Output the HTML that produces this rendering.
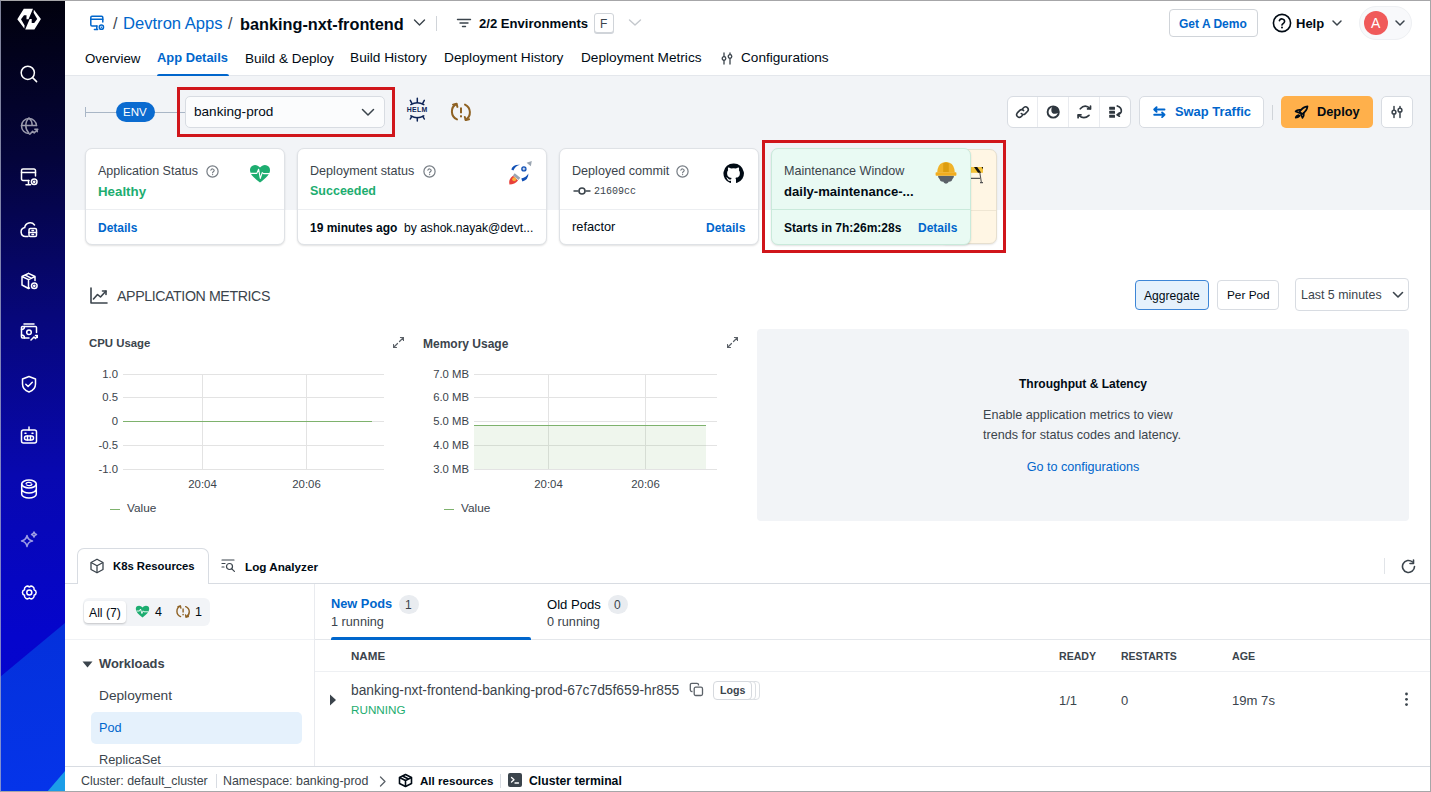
<!DOCTYPE html>
<html><head><meta charset="utf-8">
<style>
*{box-sizing:border-box;margin:0;padding:0}
html,body{width:1431px;height:792px;overflow:hidden;background:#fff;font-family:"Liberation Sans",sans-serif;color:#000a14}
.a{position:absolute}
.t{position:absolute;white-space:nowrap}
#frame{position:absolute;left:0;top:0;width:1431px;height:792px;border:1px solid #a6a6a8;border-left-color:rgba(170,175,200,0.75);z-index:50}
#side{position:absolute;left:0;top:0;width:65px;height:792px;overflow:hidden;background:linear-gradient(176deg,#01010c 0%,#04043a 20%,#07077a 40%,#0808b0 60%,#0505cc 80%,#0404d4 100%)}
</style></head><body>
<div class="a" style="left:65px;top:0px;width:1366px;height:792px;background:#fff"></div><div class="a" style="left:65px;top:76px;width:1366px;height:134px;background:#f2f4f7"></div><div class="a" style="left:65px;top:75px;width:1366px;height:1px;background:#e4e7ec"></div><svg class="a" style="left:89px;top:15px;" width="16" height="16" viewBox="0 0 16 16"><g fill="none" stroke="#0066cc" stroke-width="1.5" stroke-linecap="round" stroke-linejoin="round"><path d="M8 11H3a1.2 1.2 0 0 1-1.2-1.2V2.4A1.2 1.2 0 0 1 3 1.2h9.6a1.2 1.2 0 0 1 1.2 1.2V7"/><path d="M1.8 4.2h12"/><path d="M7.8 11v3.2M5.4 14.6h3.2"/><circle cx="12.4" cy="12.2" r="2.1"/></g><circle cx="12.4" cy="12.2" r="0.7" fill="#0066cc"/></svg><div class="t" style="left:113px;top:calc(30px - 13.55px);font-size:16px;line-height:16px;color:#3b444c;">/</div><div class="t" style="left:123px;top:calc(30px - 14.06px);font-size:16.6px;line-height:16.6px;color:#0066cc;">Devtron Apps</div><div class="t" style="left:228px;top:calc(30px - 13.55px);font-size:16px;line-height:16px;color:#3b444c;">/</div><div class="t" style="left:240px;top:calc(30px - 13.81px);font-size:16.3px;line-height:16.3px;color:#000a14;font-weight:700;">banking-nxt-frontend</div><svg class="a" style="left:413px;top:18px;" width="13" height="9" viewBox="0 0 13 9"><path d="M1.5 2l5 5 5-5" fill="none" stroke="#3b444c" stroke-width="1.4" stroke-linecap="round" stroke-linejoin="round"/></svg><div class="a" style="left:436px;top:16px;width:1px;height:15px;background:#d0d4d9"></div><svg class="a" style="left:456px;top:18px;" width="16" height="10" viewBox="0 0 16 10"><g stroke="#3b444c" stroke-width="1.4" stroke-linecap="round"><path d="M1.5 1.5h13M4 5h8M6.5 8.5h3"/></g></svg><div class="t" style="left:479px;top:calc(28px - 11.10px);font-size:13.1px;line-height:13.1px;color:#000a14;font-weight:700;">2/2 Environments</div><div class="a" style="left:594px;top:13px;width:20px;height:20px;border:1px solid #d0d4d9;border-radius:3px;background:#fff;box-shadow:0 1px 0 #d0d4d9"></div><div class="t" style="left:600px;top:calc(28px - 10.16px);font-size:12px;line-height:12px;color:#3b444c;">F</div><svg class="a" style="left:628px;top:18px;" width="14" height="9" viewBox="0 0 14 9"><path d="M1.5 2l5.5 5 5.5-5" fill="none" stroke="#c4c8cd" stroke-width="1.4" stroke-linecap="round" stroke-linejoin="round"/></svg><div class="a" style="left:1169px;top:9px;width:89px;height:28px;border:1px solid #d0d4d9;border-radius:4px;background:#fff"></div><div class="t" style="left:1179px;top:calc(28px - 10.16px);font-size:12px;line-height:12px;color:#0066cc;font-weight:700;">Get A Demo</div><svg class="a" style="left:1272px;top:13px;" width="20" height="20" viewBox="0 0 20 20"><circle cx="10" cy="10" r="8.6" fill="none" stroke="#000a14" stroke-width="1.6"/><path d="M7.4 7.6a2.7 2.7 0 0 1 5.2.9c0 1.8-2.6 2.3-2.6 3.6" fill="none" stroke="#000a14" stroke-width="1.6" stroke-linecap="round"/><circle cx="10" cy="14.6" r="1" fill="#000a14"/></svg><div class="t" style="left:1296px;top:calc(28px - 11.01px);font-size:13px;line-height:13px;color:#000a14;font-weight:700;">Help</div><svg class="a" style="left:1331px;top:19px;" width="12" height="8" viewBox="0 0 12 8"><path d="M2 2l4 4 4-4" fill="none" stroke="#3b444c" stroke-width="1.5" stroke-linecap="round" stroke-linejoin="round"/></svg><div class="a" style="left:1359px;top:6px;width:53px;height:34px;border:1px solid #eef0f3;border-radius:17px;background:#f8f9fb"></div><div class="a" style="left:1364px;top:11px;width:24px;height:24px;border-radius:50%;background:#f05a5a"></div><div class="t" style="left:1371px;top:calc(28px - 11.86px);font-size:14px;line-height:14px;color:#fff;">A</div><svg class="a" style="left:1394px;top:19px;" width="12" height="8" viewBox="0 0 12 8"><path d="M2 2l4 4 4-4" fill="none" stroke="#3b444c" stroke-width="1.5" stroke-linecap="round" stroke-linejoin="round"/></svg><div class="t" style="left:85px;top:calc(63px - 11.27px);font-size:13.3px;line-height:13.3px;color:#000a14;">Overview</div><div class="t" style="left:157px;top:calc(63px - 10.93px);font-size:12.9px;line-height:12.9px;color:#0066cc;font-weight:700;">App Details</div><div class="a" style="left:157px;top:74px;width:72px;height:2px;background:#0066cc;border-radius:2px 2px 0 0"></div><div class="t" style="left:245px;top:calc(63px - 11.48px);font-size:13.55px;line-height:13.55px;color:#000a14;">Build &amp; Deploy</div><div class="t" style="left:350px;top:calc(63px - 11.60px);font-size:13.7px;line-height:13.7px;color:#000a14;">Build History</div><div class="t" style="left:444px;top:calc(63px - 11.60px);font-size:13.7px;line-height:13.7px;color:#000a14;">Deployment History</div><div class="t" style="left:581px;top:calc(63px - 11.56px);font-size:13.65px;line-height:13.65px;color:#000a14;">Deployment Metrics</div><svg class="a" style="left:721px;top:52px;" width="12" height="13" viewBox="0 0 12 13"><g fill="none" stroke="#3b444c" stroke-width="1.3" stroke-linecap="round"><path d="M3 1v3.5M3 8.5V12M9 1v1.5M9 6.5V12"/><circle cx="3" cy="6.5" r="1.8"/><circle cx="9" cy="4.5" r="1.8"/></g></svg><div class="t" style="left:741px;top:calc(63px - 11.52px);font-size:13.6px;line-height:13.6px;color:#000a14;">Configurations</div><div class="a" style="left:85px;top:107px;width:1px;height:10px;background:#a9b6c6"></div><div class="a" style="left:85px;top:112px;width:100px;height:1px;background:#a9b6c6"></div><div class="a" style="left:116px;top:102px;width:39px;height:20px;background:#0b6bd0;border-radius:10px"></div><div class="t" style="left:123px;top:calc(117px - 9.74px);font-size:11.5px;line-height:11.5px;color:#fff;">ENV</div><div class="a" style="left:185px;top:96px;width:200px;height:32px;border:1px solid #d8dce2;border-radius:5px;background:#fbfcfd"></div><div class="t" style="left:194px;top:calc(117px - 11.52px);font-size:13.6px;line-height:13.6px;color:#000a14;">banking-prod</div><svg class="a" style="left:361px;top:108px;" width="14" height="9" viewBox="0 0 14 9"><path d="M1.5 1.5l5.5 5.5 5.5-5.5" fill="none" stroke="#3b444c" stroke-width="1.5" stroke-linecap="round" stroke-linejoin="round"/></svg><div class="a" style="left:177px;top:87px;width:218px;height:50px;border:3px solid #d0151b"></div><svg class="a" style="left:400px;top:94px;" width="34" height="32" viewBox="0 0 34 32"><g fill="none" stroke="#0d2356" stroke-width="1.5" stroke-linecap="round">
<path d="M10.8 10.6Q17.3 6.8 23.8 10.6M10.8 21.8Q17.3 25.6 23.8 21.8"/>
<path d="M17.3 4.3v4.2M10.3 6.3l1.6 3.1M24.3 6.3l-1.6 3.1M17.3 23.6v3.3M10.3 25l1.5-2.7M24.3 25l-1.5-2.7"/></g>
<text x="17.2" y="17.9" text-anchor="middle" font-family="Liberation Sans" font-weight="700" font-size="6.9" fill="#0d2356" letter-spacing="0.35">HELM</text></svg><svg class="a" style="left:400px;top:94px;" width="80" height="32" viewBox="0 0 80 32"><g fill="none" stroke="#8f6224" stroke-width="2" stroke-linecap="round" stroke-linejoin="round">
<path d="M56.4 10A8.6 8.6 0 0 0 57 25.4"/><path d="M65 10.6A8.6 8.6 0 0 1 65.6 25.8"/>
<path d="M53 10.6l3.6-0.9 0.8 3.2"/><path d="M64.8 23l1 3.1 3.3-0.8"/></g>
<path d="M61 13.6v5.6" stroke="#8f6224" stroke-width="2" stroke-linecap="butt"/><rect x="60" y="21.3" width="2" height="2" fill="#8f6224"/></svg><div class="a" style="left:1007px;top:96px;width:124px;height:32px;border:1px solid #d8dce2;border-radius:6px;background:#fff"></div><div class="a" style="left:1037px;top:97px;width:1px;height:30px;background:#e9ebef"></div><div class="a" style="left:1068px;top:97px;width:1px;height:30px;background:#e9ebef"></div><div class="a" style="left:1099px;top:97px;width:1px;height:30px;background:#e9ebef"></div><svg class="a" style="left:1015px;top:105px;" width="15" height="14" viewBox="0 0 15 14"><g fill="none" stroke="#2f373f" stroke-width="1.6" stroke-linecap="round"><path d="M6.3 8.6a2.6 2.6 0 0 0 3.8.2l2.5-2.5a2.7 2.7 0 0 0-3.8-3.8L7.6 3.7"/><path d="M8.6 5.6a2.6 2.6 0 0 0-3.8-.2L2.3 7.9a2.7 2.7 0 0 0 3.8 3.8l1.2-1.2"/></g></svg><svg class="a" style="left:1040px;top:100px;" width="88" height="24" viewBox="0 0 88 24"><defs><clipPath id="mc"><circle cx="13.2" cy="12" r="5.6"/></clipPath></defs>
<circle cx="13.2" cy="12" r="5.6" fill="none" stroke="#2f373f" stroke-width="1.9"/>
<circle cx="15.2" cy="9.9" r="3.9" fill="#2f373f" clip-path="url(#mc)"/>
<g fill="none" stroke="#2f373f" stroke-width="1.7" stroke-linecap="round" stroke-linejoin="round">
<path d="M40.3 8.8Q45 3.6 50.2 8.6"/><path d="M47.6 8.9h2.9V6"/>
<path d="M49 15.4Q43.8 20 38.4 15.2"/><path d="M41 14.8h-2.9v2.9"/>
<path d="M77.3 6Q81.8 7.6 81.3 11.4Q80.8 14 77.4 14.8"/><path d="M79.4 13l-2.2 1.8 2.2 1.4"/></g>
<g fill="#2f373f"><rect x="69.2" y="6.8" width="5.8" height="3" rx="0.5"/><rect x="69.2" y="10.8" width="5.8" height="3" rx="0.5"/><rect x="69.2" y="14.8" width="5.8" height="3" rx="0.5"/></g></svg><div class="a" style="left:1139px;top:96px;width:125px;height:32px;border:1px solid #d8dce2;border-radius:5px;background:#fff"></div><svg class="a" style="left:1148px;top:100px;" width="30" height="24" viewBox="0 0 30 24"><g fill="none" stroke="#0066cc" stroke-width="1.9" stroke-linecap="round" stroke-linejoin="round"><path d="M16.5 9.5H6.2M8.6 7.2L6.2 9.5l2.4 2.3M6.2 14.8h10.3M14.1 12.5l2.4 2.3-2.4 2.3"/></g></svg><div class="t" style="left:1175px;top:calc(117px - 10.93px);font-size:12.9px;line-height:12.9px;color:#0066cc;font-weight:700;">Swap Traffic</div><div class="a" style="left:1272px;top:105px;width:1px;height:15px;background:#d0d4d9"></div><div class="a" style="left:1281px;top:96px;width:92px;height:32px;border-radius:5px;background:#ffb04b"></div><svg class="a" style="left:1288px;top:100px;" width="30" height="24" viewBox="0 0 30 24"><g fill="none" stroke="#000a14" stroke-width="1.7" stroke-linecap="round" stroke-linejoin="round"><path d="M19.5 6.3C16.8 6.5 13.8 8.4 11.6 11.6l2.5 2.5c3.2-2.2 5.1-5.2 5.4-7.8z"/><path d="M12.6 9.9Q9.3 9.4 7.6 11.4l4 1.6M15.8 13.1Q16.3 16.4 14.5 17.9l-1.6-3.9M10.8 15Q8 15.6 7.7 17.7Q9.9 17.6 11.7 15.9"/></g></svg><div class="t" style="left:1317px;top:calc(117px - 10.84px);font-size:12.8px;line-height:12.8px;color:#000a14;font-weight:700;">Deploy</div><div class="a" style="left:1381px;top:96px;width:32px;height:32px;border:1px solid #d8dce2;border-radius:5px;background:#fff"></div><svg class="a" style="left:1390px;top:105px;" width="14" height="14" viewBox="0 0 14 14"><g fill="none" stroke="#3b444c" stroke-width="1.5" stroke-linecap="round"><path d="M4 1.5v3.5M4 9.5v3M10 1.5v1.5M10 7.5v5"/><circle cx="4" cy="7.2" r="1.9"/><circle cx="10" cy="5.2" r="1.9"/></g></svg><div class="a" style="left:85px;top:148px;width:200px;height:97px;border:1px solid #dfe2e6;border-radius:7px;background:#fff;box-shadow:0 1px 2px rgba(0,0,0,0.12)"></div><div class="a" style="left:86px;top:209px;width:198px;height:1px;background:#eceef1"></div><div class="t" style="left:98px;top:calc(176px - 10.59px);font-size:12.5px;line-height:12.5px;color:#3b444c;">Application Status</div><svg class="a" style="left:206px;top:165px;" width="13" height="13" viewBox="0 0 13 13"><circle cx="6.5" cy="6.5" r="5.6" fill="none" stroke="#767d84" stroke-width="1.2"/><path d="M4.9 5.1a1.7 1.7 0 0 1 3.3.5c0 1.1-1.6 1.3-1.6 2.2" fill="none" stroke="#767d84" stroke-width="1.2" stroke-linecap="round"/><circle cx="6.6" cy="9.6" r="0.7" fill="#767d84"/></svg><svg class="a" style="left:249px;top:164px;" width="22" height="19" viewBox="0 0 22 19"><path d="M11 18.5C5 14 1 10.5 1 6.2A5 5 0 0 1 6 1c2 0 3.4 1 5 2.6C12.6 2 14 1 16 1a5 5 0 0 1 5 5.2c0 4.3-4 7.8-10 12.3z" fill="#1dad70"/><path d="M0 9.4H7.8L9.6 5.2L11.3 14.4L13.2 8.6L14.6 9.6H22" fill="none" stroke="#fff" stroke-width="1.1" stroke-linejoin="round"/></svg><div class="t" style="left:98px;top:calc(196px - 11.27px);font-size:13.3px;line-height:13.3px;color:#1dad70;font-weight:700;">Healthy</div><div class="t" style="left:98px;top:calc(232px - 10.16px);font-size:12px;line-height:12px;color:#0066cc;font-weight:700;">Details</div><div class="a" style="left:297px;top:148px;width:250px;height:97px;border:1px solid #dfe2e6;border-radius:7px;background:#fff;box-shadow:0 1px 2px rgba(0,0,0,0.12)"></div><div class="a" style="left:298px;top:209px;width:248px;height:1px;background:#eceef1"></div><div class="t" style="left:310px;top:calc(176px - 10.67px);font-size:12.6px;line-height:12.6px;color:#3b444c;">Deployment status</div><svg class="a" style="left:423px;top:165px;" width="13" height="13" viewBox="0 0 13 13"><circle cx="6.5" cy="6.5" r="5.6" fill="none" stroke="#767d84" stroke-width="1.2"/><path d="M4.9 5.1a1.7 1.7 0 0 1 3.3.5c0 1.1-1.6 1.3-1.6 2.2" fill="none" stroke="#767d84" stroke-width="1.2" stroke-linecap="round"/><circle cx="6.6" cy="9.6" r="0.7" fill="#767d84"/></svg><svg class="a" style="left:502px;top:155px;" width="36" height="35" viewBox="0 0 36 35"><path d="M24.6 7.8L29.8 6l-1 5.2z" fill="#9aa5b1"/>
<path d="M9.3 14.6Q10.5 9.4 18 9.8Q13.2 11 11.4 15.6z" fill="#0f4fb5"/>
<path d="M19.3 23.6Q24.2 22.6 26.4 18.6Q26.6 24.8 20.4 26.4z" fill="#0f4fb5"/>
<circle cx="21.9" cy="13.9" r="2.7" fill="#0f4fb5"/><path d="M20.5 13.9h2.8M21.9 12.5v2.8" stroke="#fff" stroke-width="0.9"/>
<path d="M11.8 19.3l5.6 4.6" stroke="#9aa5b1" stroke-width="2.8"/>
<path d="M7.4 29.6Q6.2 24.2 11 20.8L16 25.6Q12.8 29.4 7.4 29.6z" fill="#e8403a"/>
<circle cx="12.2" cy="24.3" r="2" fill="#f8b03a"/></svg><div class="t" style="left:310px;top:calc(196px - 10.59px);font-size:12.5px;line-height:12.5px;color:#1dad70;font-weight:700;">Succeeded</div><div class="t" style="left:310px;top:calc(232px - 10.16px);font-size:12px;line-height:12px;color:#000a14;font-weight:700;">19 minutes ago</div><div class="t" style="left:404px;top:calc(232px - 10.25px);font-size:12.1px;line-height:12.1px;color:#000a14;">by ashok.nayak@devt...</div><div class="a" style="left:559px;top:148px;width:200px;height:97px;border:1px solid #dfe2e6;border-radius:7px;background:#fff;box-shadow:0 1px 2px rgba(0,0,0,0.12)"></div><div class="a" style="left:560px;top:209px;width:198px;height:1px;background:#eceef1"></div><div class="t" style="left:572px;top:calc(176px - 10.67px);font-size:12.6px;line-height:12.6px;color:#3b444c;">Deployed commit</div><svg class="a" style="left:676px;top:165px;" width="13" height="13" viewBox="0 0 13 13"><circle cx="6.5" cy="6.5" r="5.6" fill="none" stroke="#767d84" stroke-width="1.2"/><path d="M4.9 5.1a1.7 1.7 0 0 1 3.3.5c0 1.1-1.6 1.3-1.6 2.2" fill="none" stroke="#767d84" stroke-width="1.2" stroke-linecap="round"/><circle cx="6.6" cy="9.6" r="0.7" fill="#767d84"/></svg><svg class="a" style="left:723px;top:163px;" width="21" height="21" viewBox="0 0 21 21"><path fill="#000a14" d="M10.5 0.5a10 10 0 0 0-3.2 19.5c.5.1.7-.2.7-.5v-1.7c-2.8.6-3.4-1.3-3.4-1.3-.5-1.2-1.1-1.5-1.1-1.5-.9-.6.1-.6.1-.6 1 .1 1.5 1 1.5 1 .9 1.5 2.4 1.1 3 .8.1-.6.4-1.1.6-1.3-2.2-.3-4.6-1.1-4.6-5 0-1.1.4-2 1-2.7-.1-.3-.4-1.3.1-2.7 0 0 .8-.3 2.8 1a9.6 9.6 0 0 1 5 0c1.9-1.3 2.8-1 2.8-1 .5 1.4.2 2.4.1 2.7.6.7 1 1.6 1 2.7 0 3.9-2.3 4.7-4.6 5 .4.3.7.9.7 1.9v2.8c0 .3.2.6.7.5A10 10 0 0 0 10.5.5z"/></svg><svg class="a" style="left:573px;top:187px;" width="18" height="8" viewBox="0 0 18 8"><g fill="none" stroke="#3b444c" stroke-width="1.6"><path d="M0.5 4h5M12.5 4h5"/><circle cx="9" cy="4" r="3"/></g></svg><div class="t" style="left:594px;top:calc(195px - 8.47px);font-size:10px;line-height:10px;color:#3b444c;font-family:'Liberation Mono',monospace;">21609cc</div><div class="t" style="left:572px;top:calc(232px - 10.84px);font-size:12.8px;line-height:12.8px;color:#000a14;">refactor</div><div class="t" style="left:706px;top:calc(232px - 10.16px);font-size:12px;line-height:12px;color:#0066cc;font-weight:700;">Details</div><div class="a" style="left:940px;top:149px;width:57px;height:95px;border:1px solid #e6dfcf;border-radius:7px;background:#fff6e4;box-shadow:0 1px 2px rgba(0,0,0,0.1)"></div><div class="a" style="left:941px;top:210px;width:55px;height:1px;background:#efe6d3"></div><svg class="a" style="left:960px;top:155px;" width="30" height="32" viewBox="0 0 30 32"><g stroke="#555" stroke-width="1.1" fill="none"><path d="M19.8 17.5l1.5 9.5M11 23.4h9M20 27.6h3"/></g>
<path d="M10.5 12h12.5v5.8H10.5z" fill="#f3c33a"/><path d="M14 12h3.2l4 5.8h-3.2z" fill="#111"/><path d="M21.5 12h1.5v2.2z" fill="#111"/></svg><div class="a" style="left:771px;top:148px;width:200px;height:97px;border:1px solid #c9eadb;border-radius:7px;background:#e9faf3;box-shadow:0 1px 2px rgba(0,0,0,0.12)"></div><div class="a" style="left:772px;top:209px;width:198px;height:1px;background:#c9eadb"></div><div class="t" style="left:784px;top:calc(176px - 10.67px);font-size:12.6px;line-height:12.6px;color:#3b444c;">Maintenance Window</div><svg class="a" style="left:930px;top:155px;" width="30" height="32" viewBox="0 0 30 32"><path d="M8 20.8h16a4 4 0 0 1-1.5 3.2 3.2 3.2 0 0 1-3.6 2.6A3.3 3.3 0 0 1 16 28.7a3.3 3.3 0 0 1-2.9-2.1 3.2 3.2 0 0 1-3.6-2.6A4 4 0 0 1 8 20.8z" fill="#5b6168"/>
<path d="M7.2 17.5Q7.5 9.8 12.5 7.8Q16 6 19.5 7.8Q24.5 9.8 24.8 17.5z" fill="#f0b229"/>
<path d="M13.2 17V8.2Q16 6.6 18.8 8.2V17z" fill="#dc9d10"/>
<path d="M6.2 17.2h19.6q.6 0 .6.7v2.2q0 .7-.6.7H6.2q-.6 0-.6-.7v-2.2q0-.7.6-.7z" fill="#f2ad1f"/></svg><div class="t" style="left:784px;top:calc(196px - 11.10px);font-size:13.1px;line-height:13.1px;color:#000a14;font-weight:700;">daily-maintenance-...</div><div class="t" style="left:784px;top:calc(232px - 10.16px);font-size:12px;line-height:12px;color:#000a14;font-weight:700;">Starts in 7h:26m:28s</div><div class="t" style="left:918px;top:calc(232px - 10.16px);font-size:12px;line-height:12px;color:#0066cc;font-weight:700;">Details</div><div class="a" style="left:762px;top:140px;width:244px;height:113px;border:3px solid #d0151b"></div><svg class="a" style="left:90px;top:287px;" width="18" height="17" viewBox="0 0 18 17"><g fill="none" stroke="#3b444c" stroke-width="1.6" stroke-linecap="round" stroke-linejoin="round"><path d="M1 1v15h16"/><path d="M3.5 12l4-4.5 3 2.5 5.5-6"/><path d="M12.5 4H16v3.5"/></g></svg><div class="t" style="left:117px;top:calc(301px - 12.03px);font-size:14.2px;line-height:14.2px;color:#3b444c;letter-spacing:-0.4px;">APPLICATION METRICS</div><div class="a" style="left:1135px;top:280px;width:74px;height:30px;border:1px solid #3d85d6;border-radius:4px;background:#e5f1fc"></div><div class="t" style="left:1144px;top:calc(300px - 10.25px);font-size:12.1px;line-height:12.1px;color:#000a14;">Aggregate</div><div class="a" style="left:1217px;top:280px;width:62px;height:30px;border:1px solid #d8dce2;border-radius:4px;background:#fff"></div><div class="t" style="left:1227px;top:calc(300px - 9.99px);font-size:11.8px;line-height:11.8px;color:#000a14;">Per Pod</div><div class="a" style="left:1295px;top:278px;width:114px;height:33px;border:1px solid #d8dce2;border-radius:4px;background:#fff"></div><div class="t" style="left:1301px;top:calc(299px - 10.50px);font-size:12.4px;line-height:12.4px;color:#3b444c;">Last 5 minutes</div><svg class="a" style="left:1392px;top:291px;" width="12" height="8" viewBox="0 0 12 8"><path d="M1.5 1.5l4.5 4.5 4.5-4.5" fill="none" stroke="#3b444c" stroke-width="1.6" stroke-linecap="round" stroke-linejoin="round"/></svg><div class="t" style="left:89px;top:calc(348px - 9.66px);font-size:11.4px;line-height:11.4px;color:#3b444c;font-weight:700;">CPU Usage</div><div class="t" style="left:423px;top:calc(348px - 10.16px);font-size:12px;line-height:12px;color:#3b444c;font-weight:700;">Memory Usage</div><svg class="a" style="left:393px;top:337px;" width="11" height="11" viewBox="0 0 11 11"><g fill="none" stroke="#5b6168" stroke-width="1.2" stroke-linecap="round"><path d="M6.5 4.5l4-4M7.5 0.5h3v3M4.5 6.5l-4 4M3.5 10.5h-3v-3"/></g></svg><svg class="a" style="left:727px;top:337px;" width="11" height="11" viewBox="0 0 11 11"><g fill="none" stroke="#5b6168" stroke-width="1.2" stroke-linecap="round"><path d="M6.5 4.5l4-4M7.5 0.5h3v3M4.5 6.5l-4 4M3.5 10.5h-3v-3"/></g></svg><svg class="a" style="left:0;top:0" width="1431" height="792"><path d="M123 374.5H384" stroke="#e3e3e3" stroke-width="1"/><path d="M123 397.5H384" stroke="#e3e3e3" stroke-width="1"/><path d="M123 421.5H384" stroke="#e3e3e3" stroke-width="1"/><path d="M123 445.5H384" stroke="#e3e3e3" stroke-width="1"/><path d="M123 469.5H384" stroke="#e3e3e3" stroke-width="1"/><path d="M202.5 374V469" stroke="#e3e3e3" stroke-width="1"/><path d="M306.5 374V469" stroke="#e3e3e3" stroke-width="1"/></svg><div class="t" style="left:38px;width:80px;text-align:right;top:368.0px;font-size:11.3px;line-height:13px;color:#3b444c">1.0</div><div class="t" style="left:38px;width:80px;text-align:right;top:391.0px;font-size:11.3px;line-height:13px;color:#3b444c">0.5</div><div class="t" style="left:38px;width:80px;text-align:right;top:415.0px;font-size:11.3px;line-height:13px;color:#3b444c">0</div><div class="t" style="left:38px;width:80px;text-align:right;top:439.0px;font-size:11.3px;line-height:13px;color:#3b444c">-0.5</div><div class="t" style="left:38px;width:80px;text-align:right;top:463.0px;font-size:11.3px;line-height:13px;color:#3b444c">-1.0</div><div class="t" style="left:172.5px;width:60px;text-align:center;top:478px;font-size:11.4px;line-height:13px;color:#3b444c">20:04</div><div class="t" style="left:276.5px;width:60px;text-align:center;top:478px;font-size:11.4px;line-height:13px;color:#3b444c">20:06</div><svg class="a" style="left:0;top:0" width="1431" height="792"><path d="M123 421.5H372" stroke="#7eb26d" stroke-width="1"/></svg><svg class="a" style="left:0;top:0" width="1431" height="792"><path d="M474 374.5H717" stroke="#e3e3e3" stroke-width="1"/><path d="M474 397.5H717" stroke="#e3e3e3" stroke-width="1"/><path d="M474 421.5H717" stroke="#e3e3e3" stroke-width="1"/><path d="M474 445.5H717" stroke="#e3e3e3" stroke-width="1"/><path d="M474 469.5H717" stroke="#e3e3e3" stroke-width="1"/><path d="M548.5 374V469" stroke="#e3e3e3" stroke-width="1"/><path d="M645.5 374V469" stroke="#e3e3e3" stroke-width="1"/></svg><div class="t" style="left:389px;width:80px;text-align:right;top:368.0px;font-size:11.3px;line-height:13px;color:#3b444c">7.0 MB</div><div class="t" style="left:389px;width:80px;text-align:right;top:391.0px;font-size:11.3px;line-height:13px;color:#3b444c">6.0 MB</div><div class="t" style="left:389px;width:80px;text-align:right;top:415.0px;font-size:11.3px;line-height:13px;color:#3b444c">5.0 MB</div><div class="t" style="left:389px;width:80px;text-align:right;top:439.0px;font-size:11.3px;line-height:13px;color:#3b444c">4.0 MB</div><div class="t" style="left:389px;width:80px;text-align:right;top:463.0px;font-size:11.3px;line-height:13px;color:#3b444c">3.0 MB</div><div class="t" style="left:518.5px;width:60px;text-align:center;top:478px;font-size:11.4px;line-height:13px;color:#3b444c">20:04</div><div class="t" style="left:615.5px;width:60px;text-align:center;top:478px;font-size:11.4px;line-height:13px;color:#3b444c">20:06</div><svg class="a" style="left:0;top:0" width="1431" height="792"><path d="M474 425.5H706V469H474z" fill="rgba(126,178,109,0.12)"/><path d="M474 425.5H706" stroke="#7eb26d" stroke-width="1"/></svg><div class="a" style="left:110px;top:509px;width:10px;height:1px;background:#7eb26d"></div><div class="t" style="left:127px;top:calc(513px - 9.99px);font-size:11.8px;line-height:11.8px;color:#3b444c;">Value</div><div class="a" style="left:444px;top:509px;width:10px;height:1px;background:#7eb26d"></div><div class="t" style="left:461px;top:calc(513px - 9.99px);font-size:11.8px;line-height:11.8px;color:#3b444c;">Value</div><div class="a" style="left:757px;top:329px;width:652px;height:192px;background:#f2f4f7;border-radius:4px"></div><div class="t" style="left:757px;width:652px;text-align:center;top:calc(388px - 10.2px);font-size:12px;line-height:12px;font-weight:700;color:#000a14">Throughput &amp; Latency</div><div class="t" style="left:983px;top:calc(420px - 10.7px);font-size:12.6px;line-height:12.6px;color:#3b444c">Enable application metrics to view</div><div class="t" style="left:983px;top:calc(440px - 10.7px);font-size:12.6px;line-height:12.6px;color:#3b444c">trends for status codes and latency.</div><div class="t" style="left:757px;width:652px;text-align:center;top:calc(472px - 10.7px);font-size:12.6px;line-height:12.6px;color:#0066cc">Go to configurations</div><div class="a" style="left:65px;top:583px;width:1366px;height:1px;background:#d8dce2"></div><div class="a" style="left:77px;top:548px;width:132px;height:36px;border:1px solid #d8dce2;border-bottom:none;border-radius:7px 7px 0 0;background:#fff"></div><svg class="a" style="left:89px;top:558px;" width="16" height="16" viewBox="0 0 16 16"><g fill="none" stroke="#3b444c" stroke-width="1.3" stroke-linejoin="round"><path d="M8 1.2l6 3.3v7L8 14.8 2 11.5v-7z"/><path d="M2 4.5l6 3.3 6-3.3M8 7.8v7"/></g></svg><div class="t" style="left:113px;top:calc(571px - 9.57px);font-size:11.3px;line-height:11.3px;color:#000a14;font-weight:700;">K8s Resources</div><svg class="a" style="left:221px;top:558px;" width="15" height="15" viewBox="0 0 15 15"><g fill="none" stroke="#3b444c" stroke-width="1.2" stroke-linecap="round"><path d="M1 2h12M1 5.5h3M1 9h2"/><circle cx="8.5" cy="8.5" r="3"/><path d="M10.8 10.8l2.6 2.6"/></g></svg><div class="t" style="left:245px;top:calc(571px - 9.91px);font-size:11.7px;line-height:11.7px;color:#000a14;font-weight:700;">Log Analyzer</div><div class="a" style="left:1384px;top:558px;width:1px;height:16px;background:#e1e4e8"></div><svg class="a" style="left:1401px;top:559px;" width="16" height="15" viewBox="0 0 16 15"><g fill="none" stroke="#3b444c" stroke-width="1.6" stroke-linecap="round" stroke-linejoin="round"><path d="M13.5 7.5a6 6 0 1 1-2-4.5"/><path d="M12.5 1v3.5H9"/></g></svg><div class="a" style="left:314px;top:584px;width:1px;height:182px;background:#e9ebef"></div><div class="a" style="left:65px;top:639px;width:249px;height:1px;background:#f0f2f5"></div><div class="a" style="left:83px;top:598px;width:127px;height:28px;background:#f2f4f7;border-radius:6px"></div><div class="a" style="left:84px;top:601px;width:42px;height:22px;background:#fff;border-radius:4px;box-shadow:0 1px 2px rgba(0,0,0,0.2)"></div><div class="t" style="left:89px;top:calc(617px - 10.33px);font-size:12.2px;line-height:12.2px;color:#000a14;">All (7)</div><svg class="a" style="left:135px;top:605px;" width="15" height="13" viewBox="0 0 15 13"><path d="M7.5 12.5C3.5 9.5 0.8 7 0.8 4.1A3.3 3.3 0 0 1 4.1 0.8c1.4 0 2.4.7 3.4 1.8C8.5 1.5 9.5.8 10.9.8a3.3 3.3 0 0 1 3.3 3.3c0 2.9-2.7 5.4-6.7 8.4z" fill="#1dad70"/><path d="M1.5 6h3l1-2 1.4 4.5 1.2-2.7.8 1h4.5" fill="none" stroke="#fff" stroke-width="0.9" stroke-linejoin="round"/></svg><div class="t" style="left:155px;top:calc(617px - 10.59px);font-size:12.5px;line-height:12.5px;color:#000a14;">4</div><svg class="a" style="left:176px;top:604px;" width="14" height="15" viewBox="0 0 14 15"><g fill="none" stroke="#8f6224" stroke-width="1.4" stroke-linecap="round" stroke-linejoin="round"><path d="M4.3 2.2A5.6 5.6 0 0 0 4.6 12.6"/><path d="M9.7 2.6A5.6 5.6 0 0 1 10 12.9"/><path d="M2 2.6l2.4-.6.5 2.1M9.6 11l.6 2 2.2-.5"/></g><path d="M7.1 4.6v3.8" stroke="#8f6224" stroke-width="1.4"/><rect x="6.4" y="9.9" width="1.4" height="1.4" fill="#8f6224"/></svg><div class="t" style="left:195px;top:calc(617px - 10.59px);font-size:12.5px;line-height:12.5px;color:#000a14;">1</div><svg class="a" style="left:82px;top:661px;" width="11" height="7" viewBox="0 0 11 7"><path d="M0.5 0.5h10L5.5 6.5z" fill="#3b444c"/></svg><div class="t" style="left:99px;top:calc(669px - 10.93px);font-size:12.9px;line-height:12.9px;color:#3b444c;font-weight:700;">Workloads</div><div class="t" style="left:99px;top:calc(701px - 11.60px);font-size:13.7px;line-height:13.7px;color:#3b444c;">Deployment</div><div class="a" style="left:91px;top:712px;width:211px;height:32px;background:#e5f1fc;border-radius:5px"></div><div class="t" style="left:99px;top:calc(733px - 10.76px);font-size:12.7px;line-height:12.7px;color:#0066cc;">Pod</div><div class="t" style="left:99px;top:calc(765px - 10.84px);font-size:12.8px;line-height:12.8px;color:#3b444c;">ReplicaSet</div><div class="t" style="left:331px;top:calc(609px - 10.84px);font-size:12.8px;line-height:12.8px;color:#0066cc;font-weight:700;">New Pods</div><div class="a" style="left:399px;top:595px;width:20px;height:19px;background:#e9ecf0;border-radius:10px"></div><div class="t" style="left:405px;top:calc(609px - 10.16px);font-size:12px;line-height:12px;color:#3b444c;">1</div><div class="t" style="left:331px;top:calc(627px - 10.76px);font-size:12.7px;line-height:12.7px;color:#3b444c;">1 running</div><div class="t" style="left:547px;top:calc(609px - 11.10px);font-size:13.1px;line-height:13.1px;color:#000a14;">Old Pods</div><div class="a" style="left:608px;top:595px;width:20px;height:19px;background:#e9ecf0;border-radius:10px"></div><div class="t" style="left:614px;top:calc(609px - 10.16px);font-size:12px;line-height:12px;color:#3b444c;">0</div><div class="t" style="left:547px;top:calc(627px - 10.76px);font-size:12.7px;line-height:12.7px;color:#3b444c;">0 running</div><div class="a" style="left:315px;top:639px;width:1116px;height:1px;background:#e4e7eb"></div><div class="a" style="left:331px;top:637px;width:200px;height:3px;background:#0066cc;border-radius:2px 2px 0 0"></div><div class="t" style="left:351px;top:calc(660px - 9.83px);font-size:11.6px;line-height:11.6px;color:#3b444c;font-weight:700;">NAME</div><div class="t" style="left:1059px;top:calc(660px - 8.98px);font-size:10.6px;line-height:10.6px;color:#3b444c;font-weight:700;">READY</div><div class="t" style="left:1121px;top:calc(660px - 8.89px);font-size:10.5px;line-height:10.5px;color:#3b444c;font-weight:700;">RESTARTS</div><div class="t" style="left:1232px;top:calc(660px - 9.06px);font-size:10.7px;line-height:10.7px;color:#3b444c;font-weight:700;">AGE</div><div class="a" style="left:315px;top:671px;width:1116px;height:1px;background:#eef0f3"></div><svg class="a" style="left:329px;top:694px;" width="8" height="12" viewBox="0 0 8 12"><path d="M1 0.5v11l6-5.5z" fill="#3b444c"/></svg><div class="t" style="left:351px;top:calc(696px - 11.69px);font-size:13.8px;line-height:13.8px;color:#3b444c;">banking-nxt-frontend-banking-prod-67c7d5f659-hr855</div><svg class="a" style="left:689px;top:682px;" width="15" height="15" viewBox="0 0 15 15"><g fill="none" stroke="#5b6168" stroke-width="1.3" stroke-linejoin="round"><rect x="5.2" y="5.2" width="8.3" height="8.3" rx="1.5"/><path d="M9.5 3.5V2.8A1.5 1.5 0 0 0 8 1.3H2.8A1.5 1.5 0 0 0 1.3 2.8V8A1.5 1.5 0 0 0 2.8 9.5h.7"/></g></svg><div class="a" style="left:721px;top:681px;width:39px;height:19px;border:1px solid #dcdfe3;border-radius:4px;background:#fff"></div><div class="a" style="left:717px;top:681px;width:39px;height:19px;border:1px solid #dcdfe3;border-radius:4px;background:#fff"></div><div class="a" style="left:713px;top:681px;width:39px;height:19px;border:1px solid #d6d9de;border-radius:4px;background:#fff"></div><div class="t" style="left:720px;top:calc(694px - 8.98px);font-size:10.6px;line-height:10.6px;color:#3b444c;font-weight:700;">Logs</div><div class="t" style="left:351px;top:calc(714px - 9.91px);font-size:11.7px;line-height:11.7px;color:#1dad70;">RUNNING</div><div class="t" style="left:1059px;top:calc(705px - 11.01px);font-size:13px;line-height:13px;color:#3b444c;">1/1</div><div class="t" style="left:1121px;top:calc(705px - 11.01px);font-size:13px;line-height:13px;color:#3b444c;">0</div><div class="t" style="left:1232px;top:calc(705px - 11.10px);font-size:13.1px;line-height:13.1px;color:#3b444c;">19m 7s</div><svg class="a" style="left:1404px;top:692px;" width="5" height="15" viewBox="0 0 5 15"><g fill="#3b444c"><circle cx="2.5" cy="2" r="1.4"/><circle cx="2.5" cy="7.3" r="1.4"/><circle cx="2.5" cy="12.6" r="1.4"/></g></svg><div class="a" style="left:65px;top:766px;width:1366px;height:26px;background:#fff;border-top:1px solid #d8dce2"></div><div class="t" style="left:81px;top:calc(785px - 10.50px);font-size:12.4px;line-height:12.4px;color:#3b444c;">Cluster: default_cluster</div><div class="a" style="left:216px;top:774px;width:1px;height:14px;background:#d8dce2"></div><div class="t" style="left:223px;top:calc(785px - 10.50px);font-size:12.4px;line-height:12.4px;color:#3b444c;">Namespace: banking-prod</div><svg class="a" style="left:379px;top:776px;" width="8" height="11" viewBox="0 0 8 11"><path d="M1.5 1l4.5 4.5L1.5 10" fill="none" stroke="#5b6168" stroke-width="1.3" stroke-linecap="round" stroke-linejoin="round"/></svg><svg class="a" style="left:398px;top:773px;" width="15" height="15" viewBox="0 0 15 15"><g fill="none" stroke="#000a14" stroke-width="1.6" stroke-linejoin="round"><path d="M7.5 1.5l6 3v6l-6 3-6-3v-6z"/><path d="M1.5 4.5l6 3 6-3M7.5 7.5v6M4.5 3l6 3"/></g></svg><div class="t" style="left:420px;top:calc(785px - 9.83px);font-size:11.6px;line-height:11.6px;color:#000a14;font-weight:700;">All resources</div><div class="a" style="left:500px;top:774px;width:1px;height:14px;background:#d8dce2"></div><div class="a" style="left:508px;top:773px;width:14px;height:14px;background:#3b444c;border-radius:2px"></div><svg class="a" style="left:508px;top:773px;" width="14" height="14" viewBox="0 0 14 14"><path d="M3.5 4.5l2.5 2.3-2.5 2.3M7 10h3.5" fill="none" stroke="#fff" stroke-width="1.3" stroke-linecap="round" stroke-linejoin="round"/></svg><div class="t" style="left:529px;top:calc(785px - 10.33px);font-size:12.2px;line-height:12.2px;color:#000a14;font-weight:700;">Cluster terminal</div>
<div id="side"><div class="a" style="left:0;top:600px;width:65px;height:192px;background:linear-gradient(172deg,#0430d8 0%,#0534ea 100%);clip-path:polygon(0 77px,65px 23px,65px 192px,0 192px)"></div><div class="a" style="left:0;top:600px;width:65px;height:192px;background:#1b9de8;clip-path:polygon(47px 192px,65px 171px,65px 192px)"></div><svg class="a" style="left:14px;top:4px" width="30" height="30" viewBox="0 0 30 30"><g fill="#fff"><path d="M9.8 4.8H19L14.5 15.2H12.5V11.2H10L7 15.3 10.6 21.6 10.3 24.6 3.3 15.3z"/><path d="M20.4 25.5H11.2L15.7 15.1H17.7V19.1H20.2L23.2 15 19.6 8.7 19.9 5.7 26.9 15z"/></g></svg><svg class="a" style="left:20px;top:65px;opacity:1" width="18" height="18" viewBox="0 0 18 18"><g fill="none" stroke="#fff" stroke-width="1.5" stroke-linecap="round" stroke-linejoin="round"><circle cx="7.8" cy="7.8" r="6.6"/><path d="M12.6 12.6l4 4"/></g></svg><svg class="a" style="left:20px;top:117px;opacity:0.6" width="19" height="19" viewBox="0 0 19 19"><g fill="none" stroke="#fff" stroke-width="1.5" stroke-linecap="round" stroke-linejoin="round"><path d="M16.5 8.5A7.5 7.5 0 1 0 8.8 16.5"/><path d="M1.5 8.5h15M9 1c2.2 2 3.2 4.5 3.2 7.5M9 1C6.8 3 5.8 5.5 5.8 8.5s1 5.5 3 7.5"/><path d="M9.8 17.2l2.8-2.8 1.6 1.5 3.6-3.6M14.8 12.2h2.5v2.5"/></g></svg><svg class="a" style="left:20px;top:168px;opacity:1" width="18" height="18" viewBox="0 0 18 18"><g fill="none" stroke="#fff" stroke-width="1.5" stroke-linecap="round" stroke-linejoin="round"><path d="M9 12.5H3a1.5 1.5 0 0 1-1.5-1.5V2.5A1.5 1.5 0 0 1 3 1h11a1.5 1.5 0 0 1 1.5 1.5V8"/><path d="M1.5 4.5h14M8.5 12.5v4M6 16.8h4.5"/><circle cx="14.2" cy="13.8" r="2.8"/><circle cx="14.2" cy="13.8" r="0.6"/></g></svg><svg class="a" style="left:20px;top:221px;opacity:1" width="18" height="18" viewBox="0 0 18 18"><g fill="none" stroke="#fff" stroke-width="1.5" stroke-linecap="round" stroke-linejoin="round"><path d="M8 15.5H5.5a4.5 4.5 0 0 1-.8-8.9A5.5 5.5 0 0 1 14.5 4"/><rect x="9" y="7.5" width="7.5" height="8" rx="1.3"/><path d="M9 11.5h7.5M12 9.5h1.5M12 13.5h1.5"/></g></svg><svg class="a" style="left:20px;top:272px;opacity:1" width="18" height="18" viewBox="0 0 18 18"><g fill="none" stroke="#fff" stroke-width="1.5" stroke-linecap="round" stroke-linejoin="round"><path d="M8.5 1.3L15 4.5v4M8.5 1.3L2 4.5v8.5l6.5 3.5 1-.5M2 4.5l6.5 3.2 6.5-3.2M8.5 7.7v8.8M5 3l6.5 3.3"/><circle cx="14.3" cy="13.8" r="2.8"/><circle cx="14.3" cy="13.8" r="0.6"/></g></svg><svg class="a" style="left:20px;top:323px;opacity:1" width="18" height="18" viewBox="0 0 18 18"><g fill="none" stroke="#fff" stroke-width="1.5" stroke-linecap="round" stroke-linejoin="round"><path d="M4 1h10M2.5 3.5h13A1 1 0 0 1 16.5 4.5v5M9 15H2.5a1 1 0 0 1-1-1V4.5a1 1 0 0 1 1-1"/><circle cx="9" cy="9.3" r="2.3"/><path d="M11 17l3-3 1.5 1.5 2-2.5M15.5 12.5h2v2"/><path d="M1.5 6.5a3 3 0 0 0 3-3M1.5 12a3 3 0 0 1 3 3"/></g></svg><svg class="a" style="left:20px;top:375px;opacity:1" width="18" height="18" viewBox="0 0 18 18"><g fill="none" stroke="#fff" stroke-width="1.5" stroke-linecap="round" stroke-linejoin="round"><path d="M9 1.5l6.5 2.5v5c0 4-2.8 6.8-6.5 8-3.7-1.2-6.5-4-6.5-8V4z"/><path d="M5.8 9.2l2.3 2.3 4.2-4.2"/></g></svg><svg class="a" style="left:20px;top:426px;opacity:1" width="18" height="18" viewBox="0 0 18 18"><g fill="none" stroke="#fff" stroke-width="1.5" stroke-linecap="round" stroke-linejoin="round"><path d="M9 1v3"/><rect x="1.5" y="4" width="15" height="13" rx="2"/><rect x="4.5" y="10" width="9" height="4" rx="2"/><path d="M7.5 10v4M10.5 10v4M5 7.2h1M12 7.2h1"/></g></svg><svg class="a" style="left:20px;top:479px;opacity:1" width="18" height="21" viewBox="0 0 18 21"><g fill="none" stroke="#fff" stroke-width="1.5" stroke-linecap="round" stroke-linejoin="round"><ellipse cx="9" cy="5" rx="7.3" ry="3.9"/><path d="M1.7 5v10.2c0 2.1 3.3 3.9 7.3 3.9s7.3-1.8 7.3-3.9V5M1.7 10.1c0 2.1 3.3 3.9 7.3 3.9s7.3-1.8 7.3-3.9"/><path d="M6 4.8a3 1.8 0 0 1 5.2-.8M12 5.2a3 1.8 0 0 1-5.2.8" stroke-width="1.2"/></g></svg><svg class="a" style="left:20px;top:531px;opacity:0.6" width="18" height="18" viewBox="0 0 18 18"><g fill="none" stroke="#fff" stroke-width="1.5" stroke-linecap="round" stroke-linejoin="round"><path d="M7 4.5c.6 3.2 2.3 4.9 5.5 5.5-3.2.6-4.9 2.3-5.5 5.5-.6-3.2-2.3-4.9-5.5-5.5 3.2-.6 4.9-2.3 5.5-5.5z"/><path d="M14 1c.3 1.4 1 2.1 2.5 2.5-1.4.3-2.2 1-2.5 2.5-.3-1.4-1-2.2-2.5-2.5 1.4-.3 2.2-1 2.5-2.5z"/></g></svg><svg class="a" style="left:19px;top:583px;opacity:1" width="21" height="20" viewBox="0 0 21 20"><g fill="none" stroke="#fff" stroke-width="1.5" stroke-linecap="round" stroke-linejoin="round"><path d="M15.06 12.25A2.85 2.85 0 0 1 10.30 15.00A2.85 2.85 0 0 1 5.54 12.25A2.85 2.85 0 0 1 5.54 6.75A2.85 2.85 0 0 1 10.30 4.00A2.85 2.85 0 0 1 15.06 6.75A2.85 2.85 0 0 1 15.06 12.25z"/><circle cx="10.3" cy="9.5" r="2.5"/></g></svg></div>
<div id="frame"></div>
</body></html>
